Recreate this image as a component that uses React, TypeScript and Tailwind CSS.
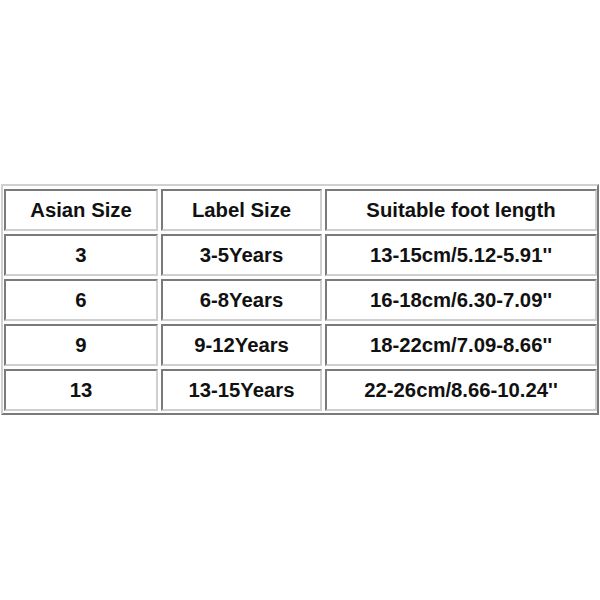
import React from "react";

const rows = [
  ["Asian Size", "Label Size", "Suitable foot length"],
  ["3", "3-5Years", "13-15cm/5.12-5.91''"],
  ["6", "6-8Years", "16-18cm/6.30-7.09''"],
  ["9", "9-12Years", "18-22cm/7.09-8.66''"],
  ["13", "13-15Years", "22-26cm/8.66-10.24''"],
];

export default function App() {
  return (
    <div className="w-[600px] h-[600px] bg-white pt-[184px] pl-[1px]">
      <div className="w-[598px] border-t-[2px] border-l-[2px] border-b-[2px] border-r-[2px] border-t-[#d0d0d0] border-l-[#d0d0d0] border-b-[#7a7a7a] border-r-[#7a7a7a] pt-[3px] pl-[1px] pr-[0px] pb-[2px]">
        <div
          className="grid grid-cols-[154px_161px_272px] gap-[3px]"
          style={{ fontFamily: '"Liberation Sans", Arial, sans-serif' }}
        >
          {rows.map((r, i) =>
            r.map((c, j) => (
              <div
                key={i + "-" + j}
                className="h-[42px] flex items-center justify-center border-[2px] border-t-[#7a7a7a] border-l-[#7a7a7a] border-b-[#cfcfcf] border-r-[#cfcfcf] text-[20.3px] font-bold text-[#111]"
              >
                {c}
              </div>
            ))
          )}
        </div>
      </div>
    </div>
  );
}
